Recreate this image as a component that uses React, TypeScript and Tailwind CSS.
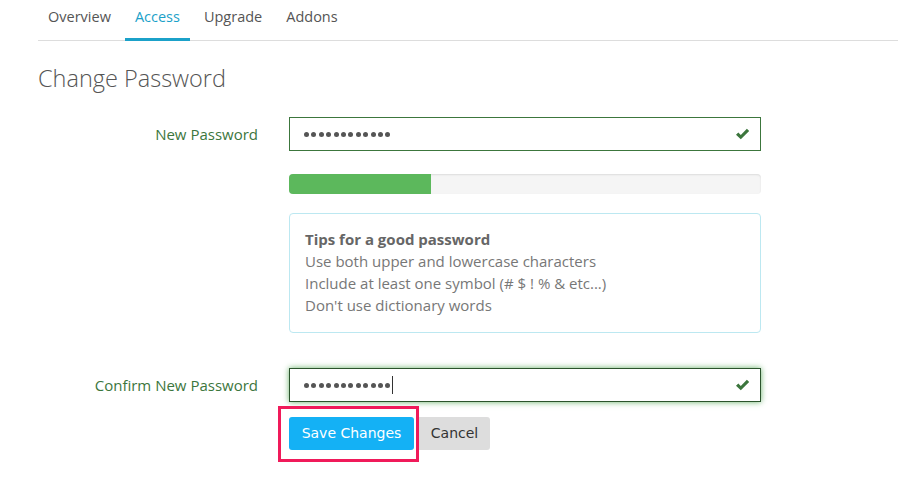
import { useState } from "react";

const tabs = ["Overview", "Access", "Upgrade", "Addons"];

const tips = [
  "Use both upper and lowercase characters",
  "Include at least one symbol (# $ ! % & etc...)",
  "Don't use dictionary words",
];

function CheckIcon() {
  return (
    <svg width="15" height="13" viewBox="0 0 15 13" className="absolute right-[10px] top-1/2 -translate-y-1/2">
      <path d="M1 7.2 L3.3 5 L5.8 7.4 L11.9 1.2 L14.2 3.4 L5.8 11.8 Z" fill="#3c763d" />
    </svg>
  );
}

function PasswordField({ focused }: { focused?: boolean }) {
  return (
    <div
      className={
        "relative h-[34px] w-[472px] border bg-white flex items-center pl-[14px] " +
        (focused
          ? "border-[#2b542c] shadow-[0_0_6px_#67b168]"
          : "border-[#3c763d]")
      }
    >
      <div className="flex items-center gap-[2.4px]">
        {Array.from({ length: 12 }).map((_, i) => (
          <span key={i} className="h-[5px] w-[5px] rounded-full bg-[#555]" />
        ))}
      </div>
      {focused && <span className="ml-[2px] h-[18px] w-px bg-[#333]" />}
      <CheckIcon />
    </div>
  );
}

export default function App() {
  const [active] = useState("Access");

  return (
    <div className="w-[898px] h-[495px] bg-white font-['Open_Sans',sans-serif] text-[#555]">
      <div className="ml-[38px] flex gap-[4px] h-[41px] border-b border-[#ddd]">
        {tabs.map((tab) => (
          <div
            key={tab}
            className={
              "px-[10px] pt-[6px] text-[14.5px] h-[41px] border-b-[3px] -mb-px " +
              (tab === active ? "text-[#1ba1c9] border-[#1ba1c9]" : "border-transparent text-[#555]")
            }
          >
            {tab}
          </div>
        ))}
      </div>

      <div className="pl-[38px]">
        <h1 className="mt-[22px] text-[23.5px] leading-[30px] text-[#555] font-light">Change Password</h1>

        <div className="mt-[24px] flex items-center gap-[31px]">
          <label className="w-[220px] text-right text-[15px] text-[#3c763d]">New Password</label>
          <PasswordField />
        </div>

        <div className="ml-[251px] mt-[23px] h-[20px] w-[472px] rounded-[4px] bg-[#f5f5f5] shadow-[inset_0_1px_2px_rgba(0,0,0,0.1)] overflow-hidden">
          <div className="h-full w-[30%] bg-[#5cb85c]" />
        </div>

        <div className="ml-[251px] mt-[19px] w-[472px] h-[120px] rounded-[4px] border border-[#bce8f1] px-[15px] pt-[14px] text-[15px] leading-[22px] text-[#777]">
          <div className="font-bold text-[#666]">Tips for a good password</div>
          {tips.map((t) => (
            <div key={t}>{t}</div>
          ))}
        </div>

        <div className="mt-[35px] flex items-center gap-[31px]">
          <label className="w-[220px] text-right text-[15px] text-[#3c763d]">Confirm New Password</label>
          <PasswordField focused />
        </div>

        <div className="ml-[251px] mt-[15px] flex items-center gap-[5px] font-['DejaVu_Sans',sans-serif] text-[14px]">
          <div className="relative">
            <button className="h-[33px] w-[125px] rounded-[3px] bg-[#14b1f5] text-white">Save Changes</button>
            <div className="absolute left-[-11px] top-[-11px] h-[56px] w-[141px] border-[3px] border-[#f01a5a] pointer-events-none" />
          </div>
          <button className="h-[33px] w-[71px] rounded-r-[3px] bg-[#ddd] text-[#333]">Cancel</button>
        </div>
      </div>
    </div>
  );
}
